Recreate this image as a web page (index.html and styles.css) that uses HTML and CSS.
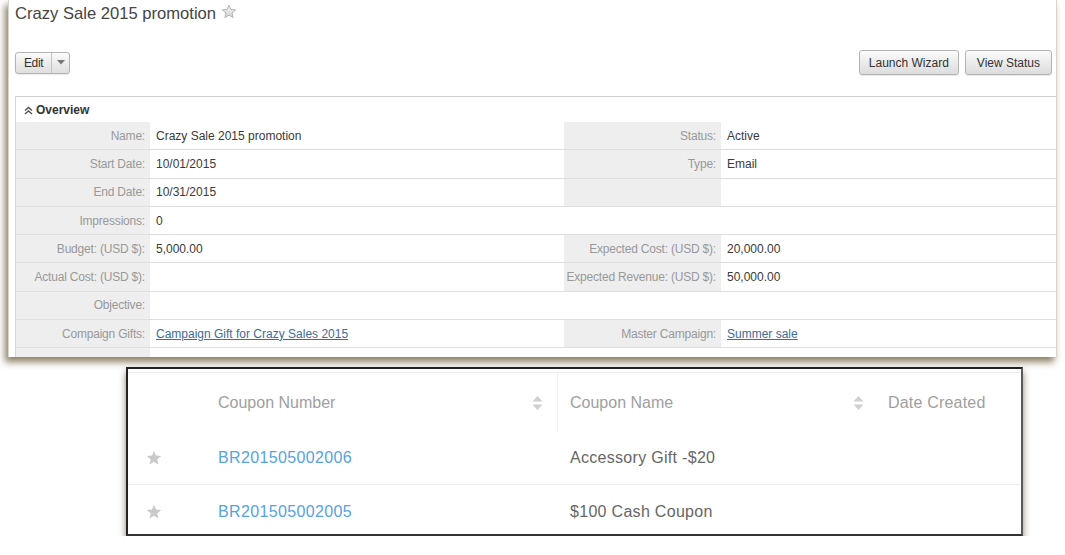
FILE: index.html
```html
<!DOCTYPE html>
<html>
<head>
<meta charset="utf-8">
<link rel="stylesheet" href="styles.css">
</head>
<body>
<div class="panel">
  <div class="title-row">
    <h1 class="title">Crazy Sale 2015 promotion</h1>
    <svg class="title-star" width="16" height="16" viewBox="0 0 16 16">
      <defs><linearGradient id="sg" x1="0" y1="0" x2="0" y2="1"><stop offset="0" stop-color="#f4f4f4"/><stop offset="1" stop-color="#d2d2d2"/></linearGradient></defs>
      <path d="M8 1.2 L9.9 5.5 L14.6 5.9 L11 9 L12.1 13.6 L8 11.2 L3.9 13.6 L5 9 L1.4 5.9 L6.1 5.5 Z" fill="url(#sg)" stroke="#b4b4b4" stroke-width="1" stroke-linejoin="round"/>
    </svg>
  </div>
  <div class="toolbar">
    <div class="split-btn">
      <span class="split-main">Edit</span>
      <span class="split-drop"><svg width="8" height="5" viewBox="0 0 8 5"><path d="M0 0 H8 L4 4.5 Z" fill="#777"/></svg></span>
    </div>
    <div class="actions">
      <span class="btn btn-launch">Launch Wizard</span>
      <span class="btn">View Status</span>
    </div>
  </div>
  <div class="overview">
    <div class="ov-head">
      <svg width="9" height="9" viewBox="0 0 9 9"><path d="M1 4.5 L4.5 1.5 L8 4.5 M1 8 L4.5 5 L8 8" fill="none" stroke="#555" stroke-width="1.4"/></svg>
      <span>Overview</span>
    </div>
    <div class="ov-row">
      <div class="lbl">Name:</div><div class="val">Crazy Sale 2015 promotion</div>
      <div class="lbl">Status:</div><div class="val">Active</div>
    </div>
    <div class="ov-row">
      <div class="lbl">Start Date:</div><div class="val">10/01/2015</div>
      <div class="lbl">Type:</div><div class="val">Email</div>
    </div>
    <div class="ov-row">
      <div class="lbl">End Date:</div><div class="val">10/31/2015</div>
      <div class="lbl"></div><div class="val"></div>
    </div>
    <div class="ov-row">
      <div class="lbl">Impressions:</div><div class="val">0</div>
      <div class="val"></div><div class="val"></div>
    </div>
    <div class="ov-row">
      <div class="lbl">Budget: (USD $):</div><div class="val">5,000.00</div>
      <div class="lbl">Expected Cost: (USD $):</div><div class="val">20,000.00</div>
    </div>
    <div class="ov-row">
      <div class="lbl">Actual Cost: (USD $):</div><div class="val"></div>
      <div class="lbl">Expected Revenue: (USD $):</div><div class="val">50,000.00</div>
    </div>
    <div class="ov-row">
      <div class="lbl">Objective:</div><div class="val"></div>
      <div class="val"></div><div class="val"></div>
    </div>
    <div class="ov-row">
      <div class="lbl">Compaign Gifts:</div><div class="val"><a class="link" href="#">Campaign Gift for Crazy Sales 2015</a></div>
      <div class="lbl">Master Campaign:</div><div class="val"><a class="link" href="#">Summer sale</a></div>
    </div>
    <div class="ov-row ov-last">
      <div class="lbl"></div><div class="val"></div>
      <div class="val"></div><div class="val"></div>
    </div>
  </div>
</div>

<div class="coupons">
  <div class="c-inner">
    <div class="c-row c-head">
      <div class="c-star"></div>
      <div class="c-num"><span>Coupon Number</span><svg class="sort" width="11" height="16" viewBox="0 0 11 16"><path d="M5.5 1 L10.5 6.5 H0.5 Z M5.5 15 L10.5 9.5 H0.5 Z" fill="#cfcfcf"/></svg></div>
      <div class="c-name"><span>Coupon Name</span><svg class="sort" width="11" height="16" viewBox="0 0 11 16"><path d="M5.5 1 L10.5 6.5 H0.5 Z M5.5 15 L10.5 9.5 H0.5 Z" fill="#cfcfcf"/></svg></div>
      <div class="c-date"><span>Date Created</span></div>
    </div>
    <div class="c-row c-body c-first">
      <div class="c-star"><svg width="16" height="16" viewBox="0 0 16 16"><path d="M8 0.8 L10 5.6 L15.2 6 L11.2 9.4 L12.4 14.6 L8 11.8 L3.6 14.6 L4.8 9.4 L0.8 6 L6 5.6 Z" fill="#c9c9c9"/></svg></div>
      <div class="c-num"><a class="c-link" href="#">BR201505002006</a></div>
      <div class="c-name"><span>Accessory Gift -$20</span></div>
      <div class="c-date"></div>
    </div>
    <div class="c-row c-body c-second">
      <div class="c-star"><svg width="16" height="16" viewBox="0 0 16 16"><path d="M8 0.8 L10 5.6 L15.2 6 L11.2 9.4 L12.4 14.6 L8 11.8 L3.6 14.6 L4.8 9.4 L0.8 6 L6 5.6 Z" fill="#c9c9c9"/></svg></div>
      <div class="c-num"><a class="c-link" href="#">BR201505002005</a></div>
      <div class="c-name"><span>$100 Cash Coupon</span></div>
      <div class="c-date"></div>
    </div>
  </div>
</div>
</body>
</html>
```

FILE: styles.css
```css
html, body {
  margin: 0;
  padding: 0;
  background: #ffffff;
  font-family: "Liberation Sans", Arial, sans-serif;
}

.panel {
  margin-left: 8px;
  width: 1041px;
  height: 357px;
  background: #ffffff;
  border-left: 1px solid #d9d5cc;
  border-right: 1px solid #d9d5cc;
  box-shadow: -3px 5px 7px rgba(110, 95, 60, 0.8);
  padding-left: 6px;
  box-sizing: content-box;
  overflow: hidden;
}

.title-row {
  display: flex;
  align-items: center;
  height: 28px;
}

.title {
  margin: 0;
  font-size: 16.6px;
  font-weight: normal;
  color: #454545;
  line-height: 28px;
}

.title-star {
  margin-left: 5px;
  margin-top: -4px;
}

.toolbar {
  display: flex;
  justify-content: space-between;
  align-items: center;
  margin-top: 22px;
  height: 25px;
  padding-right: 4px;
}

.split-btn {
  display: flex;
  height: 20px;
  border: 1px solid #b3b3b3;
  border-radius: 3px;
  background: linear-gradient(#fbfbfb, #dedede);
  font-size: 12px;
  color: #333;
  box-shadow: 0 1px 1px rgba(0,0,0,0.08);
}

.split-main {
  display: flex;
  align-items: center;
  padding: 0 8px 0 8px;
  border-right: 1px solid #c3c3c3;
  letter-spacing: -0.4px;
}

.split-drop {
  display: flex;
  align-items: center;
  justify-content: center;
  width: 17px;
}

.actions {
  display: flex;
  gap: 6px;
}

.btn {
  display: flex;
  align-items: center;
  height: 23px;
  padding: 0 11px;
  border: 1px solid #b3b3b3;
  border-radius: 3px;
  background: linear-gradient(#fbfbfb, #dcdcdc);
  font-size: 12px;
  color: #333;
  box-shadow: 0 1px 1px rgba(0,0,0,0.1);
}

.btn-launch {
  padding: 0 9px;
}

.overview {
  margin-top: 21px;
  border-top: 1px solid #cfcfcf;
  border-left: 1px solid #d6d6d6;
}

.ov-head {
  display: flex;
  align-items: center;
  gap: 3px;
  height: 24px;
  padding-left: 8px;
  padding-top: 1px;
  font-size: 12px;
  font-weight: bold;
  color: #333;
}

.ov-row {
  display: grid;
  grid-template-columns: 134px 414px 157px 1fr;
  height: 28.3px;
  box-sizing: border-box;
  border-bottom: 1px solid #dedede;
  font-size: 12px;
}

.lbl {
  background: #eeeeee;
  color: #999999;
  padding-right: 5px;
  display: flex;
  align-items: center;
  justify-content: flex-end;
  white-space: nowrap;
  letter-spacing: -0.2px;
}

.val {
  color: #3a3a3a;
  padding-left: 6px;
  display: flex;
  align-items: center;
  white-space: nowrap;
}

.link {
  color: #3d6b9c;
  text-decoration: underline;
}

.coupons {
  margin-left: 126px;
  margin-top: 10px;
  width: 893px;
  height: 165px;
  border: 2px solid #222;
  border-right-color: #5a5a5a;
  border-bottom-color: #333;
  background: #ffffff;
  box-shadow: 0 5px 7px rgba(110, 95, 60, 0.8);
}

.c-inner {
  margin-top: 3px;
  border-top: 1px solid #f0f0f0;
}

.c-row {
  display: grid;
  grid-template-columns: 72px 357px 320px 1fr;
  font-size: 16px;
}

.c-head {
  height: 59px;
  color: #a0a0a0;
}

.c-head > div {
  display: flex;
  align-items: center;
}

.c-head .c-num {
  justify-content: space-between;
  padding-left: 18px;
  padding-right: 14px;
}

.c-head .c-name {
  justify-content: space-between;
  border-left: 1px solid #efefef;
  padding-left: 12px;
  padding-right: 13px;
}

.c-head .c-date {
  padding-left: 11px;
  letter-spacing: 0.2px;
}

.c-body > div {
  display: flex;
  align-items: center;
}

.c-first {
  height: 53px;
  box-sizing: border-box;
  border-bottom: 1px solid #ededed;
}

.c-second {
  height: 49px;
  box-sizing: border-box;
  padding-top: 5px;
}

.c-body .c-star {
  padding-left: 18px;
}

.c-body .c-num {
  padding-left: 18px;
}

.c-link {
  color: #55a3e0;
  text-decoration: none;
  letter-spacing: 0.35px;
}

.c-body .c-name {
  padding-left: 13px;
  color: #666;
  letter-spacing: 0.3px;
}
```
